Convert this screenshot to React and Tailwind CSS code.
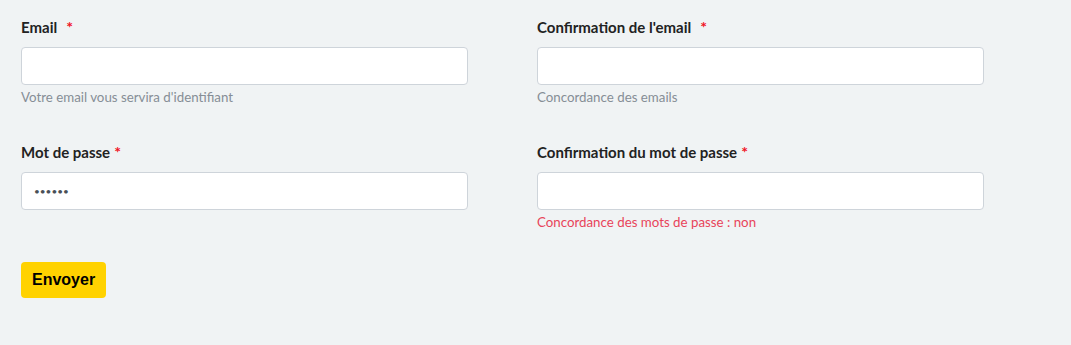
import { useState } from "react";

function Field({ label, gap, type = "text", value, onChange, help, helpClass }) {
  return (
    <div className="flex flex-col">
      <label className="mb-[10px] h-[20px] text-[15px] font-bold leading-[20px] text-[#222]">
        {label}
        <span className={`${gap ? "ml-[9px]" : "ml-[4px]"} text-[16px] text-[#f0141e]`}>*</span>
      </label>
      <input
        type={type}
        value={value}
        onChange={onChange}
        className={`h-[38px] w-full rounded-[4px] border border-[#ced4da] bg-white px-3 text-[#495057] outline-none ${
          type === "password" ? "text-[10px]" : "text-[14px]"
        }`}
      />
      <div className={`mt-[4px] h-[17px] text-[13.3px] leading-[17px] ${helpClass}`}>{help}</div>
    </div>
  );
}

export default function App() {
  const [email, setEmail] = useState("");
  const [emailConfirm, setEmailConfirm] = useState("");
  const [password, setPassword] = useState("secret");
  const [passwordConfirm, setPasswordConfirm] = useState("");

  return (
    <div className="min-h-[345px] w-full bg-[#f0f3f4] px-[21px] pt-[17px] font-['Lato',sans-serif]">
      <div className="grid w-[963px] grid-cols-2 gap-x-[69px] gap-y-[36px]">
        <Field
          label="Email"
          gap
          value={email}
          onChange={(e) => setEmail(e.target.value)}
          help="Votre email vous servira d'identifiant"
          helpClass="text-[#868e96]"
        />
        <Field
          label="Confirmation de l'email"
          gap
          value={emailConfirm}
          onChange={(e) => setEmailConfirm(e.target.value)}
          help="Concordance des emails"
          helpClass="text-[#868e96]"
        />
        <Field
          label="Mot de passe"
          type="password"
          value={password}
          onChange={(e) => setPassword(e.target.value)}
          help=""
        />
        <Field
          label="Confirmation du mot de passe"
          type="password"
          value={passwordConfirm}
          onChange={(e) => setPasswordConfirm(e.target.value)}
          help="Concordance des mots de passe : non"
          helpClass="text-[#e8445a]"
        />
      </div>
      <button
        type="button"
        className="mt-[31px] h-[36px] rounded-[4px] bg-[#ffd200] px-[11px] font-['Liberation_Sans',sans-serif] text-[16px] font-bold text-black"
      >
        Envoyer
      </button>
    </div>
  );
}
